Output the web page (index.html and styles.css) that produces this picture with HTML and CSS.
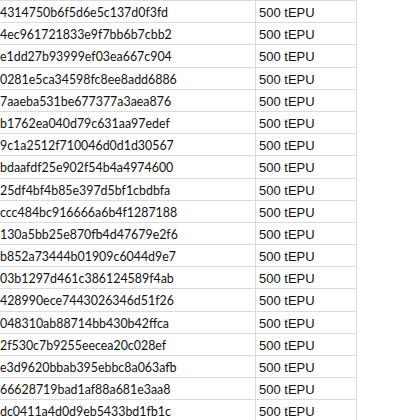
FILE: index.html
```html
<!DOCTYPE html>
<html>
<head>
<meta charset="utf-8">
<link rel="stylesheet" href="styles.css">
</head>
<body>
<div class="table">
  <div class="row"><div class="hash">4314750b6f5d6e5c137d0f3fd</div><div class="amt">500 tEPU</div></div>
  <div class="row"><div class="hash">4ec961721833e9f7bb6b7cbb2</div><div class="amt">500 tEPU</div></div>
  <div class="row"><div class="hash">e1dd27b93999ef03ea667c904</div><div class="amt">500 tEPU</div></div>
  <div class="row"><div class="hash">0281e5ca34598fc8ee8add6886</div><div class="amt">500 tEPU</div></div>
  <div class="row"><div class="hash">7aaeba531be677377a3aea876</div><div class="amt">500 tEPU</div></div>
  <div class="row"><div class="hash">b1762ea040d79c631aa97edef</div><div class="amt">500 tEPU</div></div>
  <div class="row"><div class="hash">9c1a2512f710046d0d1d30567</div><div class="amt">500 tEPU</div></div>
  <div class="row"><div class="hash">bdaafdf25e902f54b4a4974600</div><div class="amt">500 tEPU</div></div>
  <div class="row"><div class="hash">25df4bf4b85e397d5bf1cbdbfa</div><div class="amt">500 tEPU</div></div>
  <div class="row"><div class="hash">ccc484bc916666a6b4f1287188</div><div class="amt">500 tEPU</div></div>
  <div class="row"><div class="hash">130a5bb25e870fb4d47679e2f6</div><div class="amt">500 tEPU</div></div>
  <div class="row"><div class="hash">b852a73444b01909c6044d9e7</div><div class="amt">500 tEPU</div></div>
  <div class="row"><div class="hash">03b1297d461c386124589f4ab</div><div class="amt">500 tEPU</div></div>
  <div class="row"><div class="hash">428990ece7443026346d51f26</div><div class="amt">500 tEPU</div></div>
  <div class="row"><div class="hash">048310ab88714bb430b42ffca</div><div class="amt">500 tEPU</div></div>
  <div class="row"><div class="hash">2f530c7b9255eecea20c028ef</div><div class="amt">500 tEPU</div></div>
  <div class="row"><div class="hash">e3d9620bbab395ebbc8a063afb</div><div class="amt">500 tEPU</div></div>
  <div class="row"><div class="hash">66628719bad1af88a681e3aa8</div><div class="amt">500 tEPU</div></div>
  <div class="row"><div class="hash">dc0411a4d0d9eb5433bd1fb1c</div><div class="amt">500 tEPU</div></div>
</div>
</body>
</html>
```
FILE: styles.css
```css
html, body {
  margin: 0;
  padding: 0;
  background: #ffffff;
  overflow: hidden;
  width: 420px;
  height: 420px;
}

.table {
  width: 357px;
  border-top: 1px solid #dcdcdc;
}

.row {
  display: flex;
  height: 22.2px;
  box-sizing: border-box;
  border-bottom: 1px solid #dcdcdc;
  color: #111111;
}

.hash {
  width: 256px;
  box-sizing: border-box;
  border-right: 1px solid #dcdcdc;
  font-family: Lato, "Open Sans", sans-serif;
  font-size: 12.4px;
  line-height: 20px;
  padding-top: 2px;
  white-space: nowrap;
  overflow: hidden;
}

.amt {
  width: 101px;
  box-sizing: border-box;
  border-right: 1px solid #dcdcdc;
  padding-left: 3px;
  padding-top: 2px;
  font-family: "Liberation Sans", Arial, sans-serif;
  font-size: 13px;
  line-height: 20px;
  white-space: nowrap;
}
```
